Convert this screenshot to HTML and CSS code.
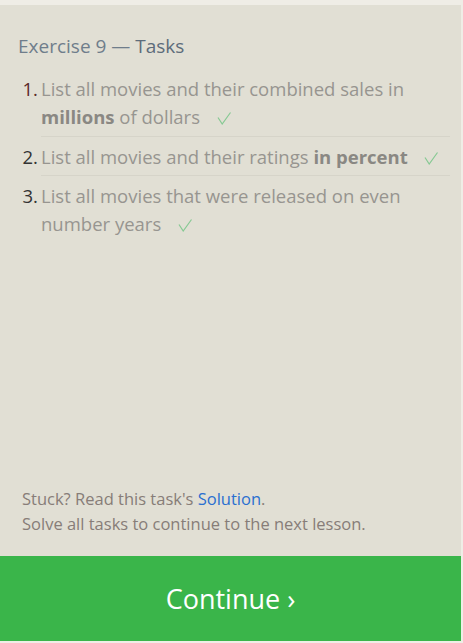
FILE: index.html
```html
<!DOCTYPE html>
<html>
<head>
<meta charset="utf-8">
<link rel="stylesheet" href="styles.css">
</head>
<body>
<div class="app">
  <div class="panel">
    <h2 class="title">Exercise 9 — <span class="title-em">Tasks</span></h2>
    <ol class="tasks">
      <li class="task first"><span class="num">1.</span><span class="text">List all movies and their combined sales in <b>millions</b> of dollars <svg class="check" viewBox="0 0 14 13" width="14" height="13"><path d="M1 5.5 L5.2 12 L13.5 0.5" fill="none" stroke="#86c993" stroke-width="1.2"/></svg></span></li>
      <li class="task"><span class="num">2.</span><span class="text">List all movies and their ratings <b>in percent</b> <svg class="check" viewBox="0 0 14 13" width="14" height="13"><path d="M1 5.5 L5.2 12 L13.5 0.5" fill="none" stroke="#86c993" stroke-width="1.2"/></svg></span></li>
      <li class="task last"><span class="num">3.</span><span class="text">List all movies that were released on even number years <svg class="check" viewBox="0 0 14 13" width="14" height="13"><path d="M1 5.5 L5.2 12 L13.5 0.5" fill="none" stroke="#86c993" stroke-width="1.2"/></svg></span></li>
    </ol>
    <div class="spacer"></div>
    <div class="help">
      <p>Stuck? Read this task's <a class="link" href="#">Solution</a>.</p>
      <p>Solve all tasks to continue to the next lesson.</p>
    </div>
  </div>
  <button class="continue">Continue ›</button>
</div>
</body>
</html>
```
FILE: styles.css
```css
html, body {
  margin: 0;
  padding: 0;
  background: #efede6;
  font-family: "Open Sans", "Noto Sans", sans-serif;
}
.app {
  width: 461px;
  padding-top: 5px;
  display: flex;
  flex-direction: column;
}
.panel {
  background: #e1dfd4;
  height: 551px;
  box-sizing: border-box;
  padding: 28px 11px 0 18px;
  display: flex;
  flex-direction: column;
}
.title {
  margin: 0;
  font-size: 19px;
  font-weight: 400;
  line-height: 26px;
  color: #6f7d8b;
}
.title-em {
  color: #5d6c7b;
}
.tasks {
  list-style: none;
  margin: 16px 0 0 0;
  padding: 0;
}
.task {
  display: flex;
  font-size: 18.5px;
  line-height: 28px;
  color: #979590;
  padding: 6px 0 4px;
}
.task + .task {
  border-top: 1px solid #d6d4c9;
  margin-left: 23px;
}
.task + .task .num {
  margin-left: -23px;
}
.task.first {
  padding-top: 0;
  padding-bottom: 5px;
}
.num {
  width: 23px;
  box-sizing: border-box;
  padding-right: 3px;
  text-align: right;
  flex: none;
  color: #333;
}
.first .num {
  color: #5a2a2a;
}
.text b {
  color: #8a8883;
  font-weight: 700;
}
.check {
  margin-left: 12px;
  vertical-align: -1px;
}
.spacer {
  flex: 1;
}
.help {
  padding: 0 0 20px 4px;
  font-size: 16.5px;
  line-height: 25px;
  color: #877d78;
}
.help p {
  margin: 0;
}
.link {
  color: #2a6fd0;
  text-decoration: none;
}
.continue {
  height: 85px;
  border: none;
  background: #3ab54a;
  color: #fff;
  font-family: inherit;
  font-size: 27px;
  padding: 0;
  cursor: pointer;
}
```
